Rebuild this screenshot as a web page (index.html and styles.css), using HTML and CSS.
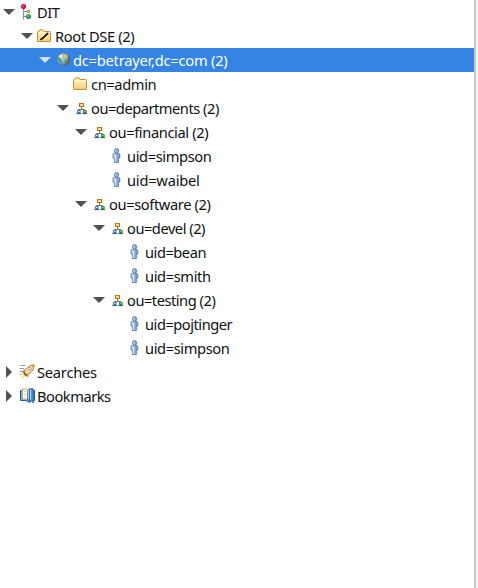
FILE: index.html
```
<!DOCTYPE html>
<html lang="en">
<head>
<meta charset="utf-8">
<title>LDAP Browser</title>
<link rel="stylesheet" href="styles.css">
</head>
<body>
<svg class="defs" aria-hidden="true">
  <defs>
    <linearGradient id="gold" x2="0" y2="1"><stop stop-color="#fff3c4"/><stop offset="1" stop-color="#fbcf72"/></linearGradient>
    <linearGradient id="blue"><stop stop-color="#c9dcf0"/><stop offset="1" stop-color="#6290c4"/></linearGradient>
    <radialGradient id="world" cx=".35" cy=".3" r=".75"><stop stop-color="#d5f0f5"/><stop offset=".55" stop-color="#70b4cb"/><stop offset="1" stop-color="#35657e"/></radialGradient>
    <symbol id="open" viewBox="0 0 12 6"><path d="M0 0h12L6 6z" fill="currentColor"/></symbol>
    <symbol id="closed" viewBox="0 0 6 12"><path d="M0 0v12L6 6z" fill="currentColor"/></symbol>
    <symbol id="dit" viewBox="0 0 16 16">
      <path d="M4.5 5v10.5" stroke="#8b8e9c" stroke-width="1.2"/><path d="M5 7.5h3M5 12.5h3" stroke="#858a9b"/>
      <circle cx="4.5" cy="2.5" r="2.6" fill="#d5174c"/><circle cx="4" cy="2" r=".9" fill="#ec4f74"/>
      <path d="M8.5 6.5h2v2h-2z" fill="#fff0a8" stroke="#b98b20"/>
      <circle cx="9.5" cy="12.5" r="2.6" fill="#3b9562"/><circle cx="9" cy="12" r="1" fill="#79ca87"/>
    </symbol>
    <symbol id="folder" viewBox="0 0 16 16">
      <path d="M.5 13V4.5q0-1 1-1H2l1-1.7h3l1.2 1.7h5.3q1 0 1 1V13q0 .5-.7.5H1.2q-.7 0-.7-.5z" fill="url(#gold)" stroke="#c98c38"/>
      <path d="M1.5 4.7h11" stroke="#fff8dc"/>
    </symbol>
    <symbol id="root" viewBox="0 0 16 16"><use href="#folder"/><path d="M4 11.2l1.6-.9 5-4.8" stroke="#111" stroke-width="1.8" stroke-linecap="round" fill="none"/></symbol>
    <symbol id="globe" viewBox="0 0 16 16">
      <circle cx="8.5" cy="7.5" r="6.3" fill="url(#world)" stroke="#55778b" stroke-width=".6"/>
      <path d="M8 1.8l3 .5 2.2 2-1 1.8-2.2-.5L8.5 7 7 5.3z" fill="#c5c27c"/>
      <path d="M3 5l2.3 1 1.7 2.6-.7 3-1.4-.8-.6-2.6L3 7.5z" fill="#5c9472"/>
      <path d="M9.5 8.3l3-.4 1 1.6-2 2.8-1.4-.8z" fill="#708b53"/>
      <path d="M3.6 4.6l2.2-2 1.4.9-1.7 2z" fill="#f2e9c6"/>
      <path d="M13.3 4.2q2.2 4.8-1.8 8.2" stroke="#625847" stroke-width="1.1" fill="none"/>
    </symbol>
    <symbol id="unit" viewBox="0 0 16 16">
      <path d="M8.5 7v2M5.5 10.5v-1h6v1" stroke="#76746d" fill="none"/>
      <path d="M6.5 3.5h4v3h-4z" fill="#ffe28c" stroke="#b17b20" stroke-width="1.2"/>
      <path d="M4.5 10.5h2.7v2H4.5z" fill="#d9e9fb" stroke="#4770b6"/>
      <path d="M10.5 10.5h2.7v2h-2.7z" fill="#9bd28a" stroke="#338343"/>
      <path d="M3.3 13.5h4.8" stroke="#3c62aa" stroke-width="1.2"/><path d="M9.2 13.5H14" stroke="#277142" stroke-width="1.2"/>
    </symbol>
    <symbol id="person" viewBox="0 0 16 16">
      <path d="M5.5 5.3h4q1.3 0 1.3 1.3V10l-1.4.5v4h-4v-4L4 10V6.6q0-1.3 1.5-1.3z" fill="url(#blue)" stroke="#5b80af" stroke-width=".9"/>
      <circle cx="7.5" cy="2.8" r="2.2" fill="url(#blue)" stroke="#5d82ad" stroke-width=".9"/>
      <path d="M6.4 6.7v6.6" stroke="#e2eefa"/>
    </symbol>
    <symbol id="search" viewBox="0 0 16 16">
      <path d="M.5 1.5h6M.5 4.5H5M.5 7.5h3M.5 10.5h2" stroke="#8da3c8"/>
      <path d="M6.5 5.5L3 7.8l2 1.2zM10 9l-1.5 4-1.5-2.3z" fill="#d6a04d" stroke="#987144" stroke-width=".6"/>
      <path d="M5 8C7 4.2 10 1.2 15.2.8 15 6 12 9 8 11z" fill="#ffdc91" stroke="#b57d3b"/>
      <path d="M12 1.6l3.2-.8-.5 3.5z" fill="#d89847"/>
      <circle cx="11" cy="4.8" r="1.3" fill="#f7fbff" stroke="#7187a6" stroke-width=".7"/>
      <path d="M5 8l3 3-1.3 1.2L4 9.2z" fill="#655a51"/>
      <path d="M4 9.2l2.7 3L1.5 15z" fill="#ffd85a"/><path d="M4 10.4l1.3 1.4-3 2z" fill="#fff5b8"/>
    </symbol>
    <symbol id="book" viewBox="0 0 16 16">
      <path d="M1.5 2v10.5h5.3l1.7 1.3 1.7-1.3h5.3V2" fill="#8db6df" stroke="#25588f"/>
      <path d="M3.3 1h3.5L8.5 2.3v10L6.8 11.2H3.3z" fill="#fffdf2" stroke="#a98b55" stroke-width=".8"/>
      <path d="M8.5 2.3L10.2 1h4v10.2h-4l-1.7 1.1z" fill="#fffdf2" stroke="#806c42" stroke-width=".8"/>
      <path d="M4.5 3.5h2.7M4.5 5.5h2.7M4.5 7.5h2.7M4.5 9.5h2.7" stroke="#b9cbdc" stroke-width=".8"/>
      <path d="M10.2 1h4v13.8l-2-2.1-2 2.1z" fill="#4898de" stroke="#1761a9"/><path d="M11.5 1.5v10.8" stroke="#a0d4f8"/>
    </symbol>
  </defs>
</svg>
<main class="panel">
  <ul class="tree">
    <li><div class="row"><svg class="arrow"><use href="#open"/></svg><svg class="icon"><use href="#dit"/></svg><span class="tight">DIT</span></div>
      <ul>
        <li><div class="row"><svg class="arrow"><use href="#open"/></svg><svg class="icon"><use href="#root"/></svg><span>Root DSE (2)</span></div>
          <ul>
            <li><div class="row selected"><svg class="arrow"><use href="#open"/></svg><svg class="icon"><use href="#globe"/></svg><span class="loose">dc=betrayer,dc=com (2)</span></div>
              <ul>
                <li><div class="row leaf"><svg class="icon"><use href="#folder"/></svg><span>cn=admin</span></div></li>
                <li><div class="row"><svg class="arrow"><use href="#open"/></svg><svg class="icon"><use href="#unit"/></svg><span class="tight">ou=departments (2)</span></div>
                  <ul>
                    <li><div class="row"><svg class="arrow"><use href="#open"/></svg><svg class="icon"><use href="#unit"/></svg><span>ou=financial (2)</span></div>
                      <ul>
                        <li><div class="row leaf"><svg class="icon"><use href="#person"/></svg><span>uid=simpson</span></div></li>
                        <li><div class="row leaf"><svg class="icon"><use href="#person"/></svg><span class="loose">uid=waibel</span></div></li>
                      </ul>
                    </li>
                    <li><div class="row"><svg class="arrow"><use href="#open"/></svg><svg class="icon"><use href="#unit"/></svg><span>ou=software (2)</span></div>
                      <ul>
                        <li><div class="row"><svg class="arrow"><use href="#open"/></svg><svg class="icon"><use href="#unit"/></svg><span class="tight">ou=devel (2)</span></div>
                          <ul>
                            <li><div class="row leaf"><svg class="icon"><use href="#person"/></svg><span class="tight">uid=bean</span></div></li>
                            <li><div class="row leaf"><svg class="icon"><use href="#person"/></svg><span>uid=smith</span></div></li>
                          </ul>
                        </li>
                        <li><div class="row"><svg class="arrow"><use href="#open"/></svg><svg class="icon"><use href="#unit"/></svg><span class="tight">ou=testing (2)</span></div>
                          <ul>
                            <li><div class="row leaf"><svg class="icon"><use href="#person"/></svg><span class="tight">uid=pojtinger</span></div></li>
                            <li><div class="row leaf"><svg class="icon"><use href="#person"/></svg><span>uid=simpson</span></div></li>
                          </ul>
                        </li>
                      </ul>
                    </li>
                  </ul>
                </li>
              </ul>
            </li>
          </ul>
        </li>
      </ul>
    </li>
    <li><div class="row"><svg class="arrow closed"><use href="#closed"/></svg><svg class="icon"><use href="#search"/></svg><span class="loose">Searches</span></div></li>
    <li><div class="row"><svg class="arrow closed"><use href="#closed"/></svg><svg class="icon"><use href="#book"/></svg><span class="tight">Bookmarks</span></div></li>
  </ul>
</main>
</body>
</html>
```
FILE: styles.css
```
body {
  margin: 0;
  height: 588px;
  overflow: hidden;
  background: #f6f5f4;
  color: #111;
  font: 14.67px/24px "Noto Sans", sans-serif;
  letter-spacing: -0.38px;
}
.defs { position: absolute; width: 0; height: 0; }
.panel {
  width: 474px;
  height: 588px;
  overflow: hidden;
  background: #fff;
  border-right: 2px solid #cdc7c2;
}
ul { margin: 0; padding: 0; list-style: none; }
.tree ul { margin-left: 18px; }
.row {
  display: flex;
  align-items: center;
  height: 24px;
  padding-left: 3px;
  white-space: nowrap;
}
.leaf { padding-left: 19px; }
.arrow { flex: none; width: 12px; height: 6px; margin-right: 4px; color: #4f5252; }
.closed { width: 6px; height: 12px; margin: 0 7px 0 3px; }
.icon { flex: none; width: 16px; height: 16px; margin-right: 2px; }
.tight { letter-spacing: -0.48px; }
.loose { letter-spacing: -0.22px; }
.tree .selected {
  margin-left: -36px;
  padding-left: 39px;
  background: #3584e4;
  color: #fff;
}
.selected .arrow { color: #cde0f8; }
```
